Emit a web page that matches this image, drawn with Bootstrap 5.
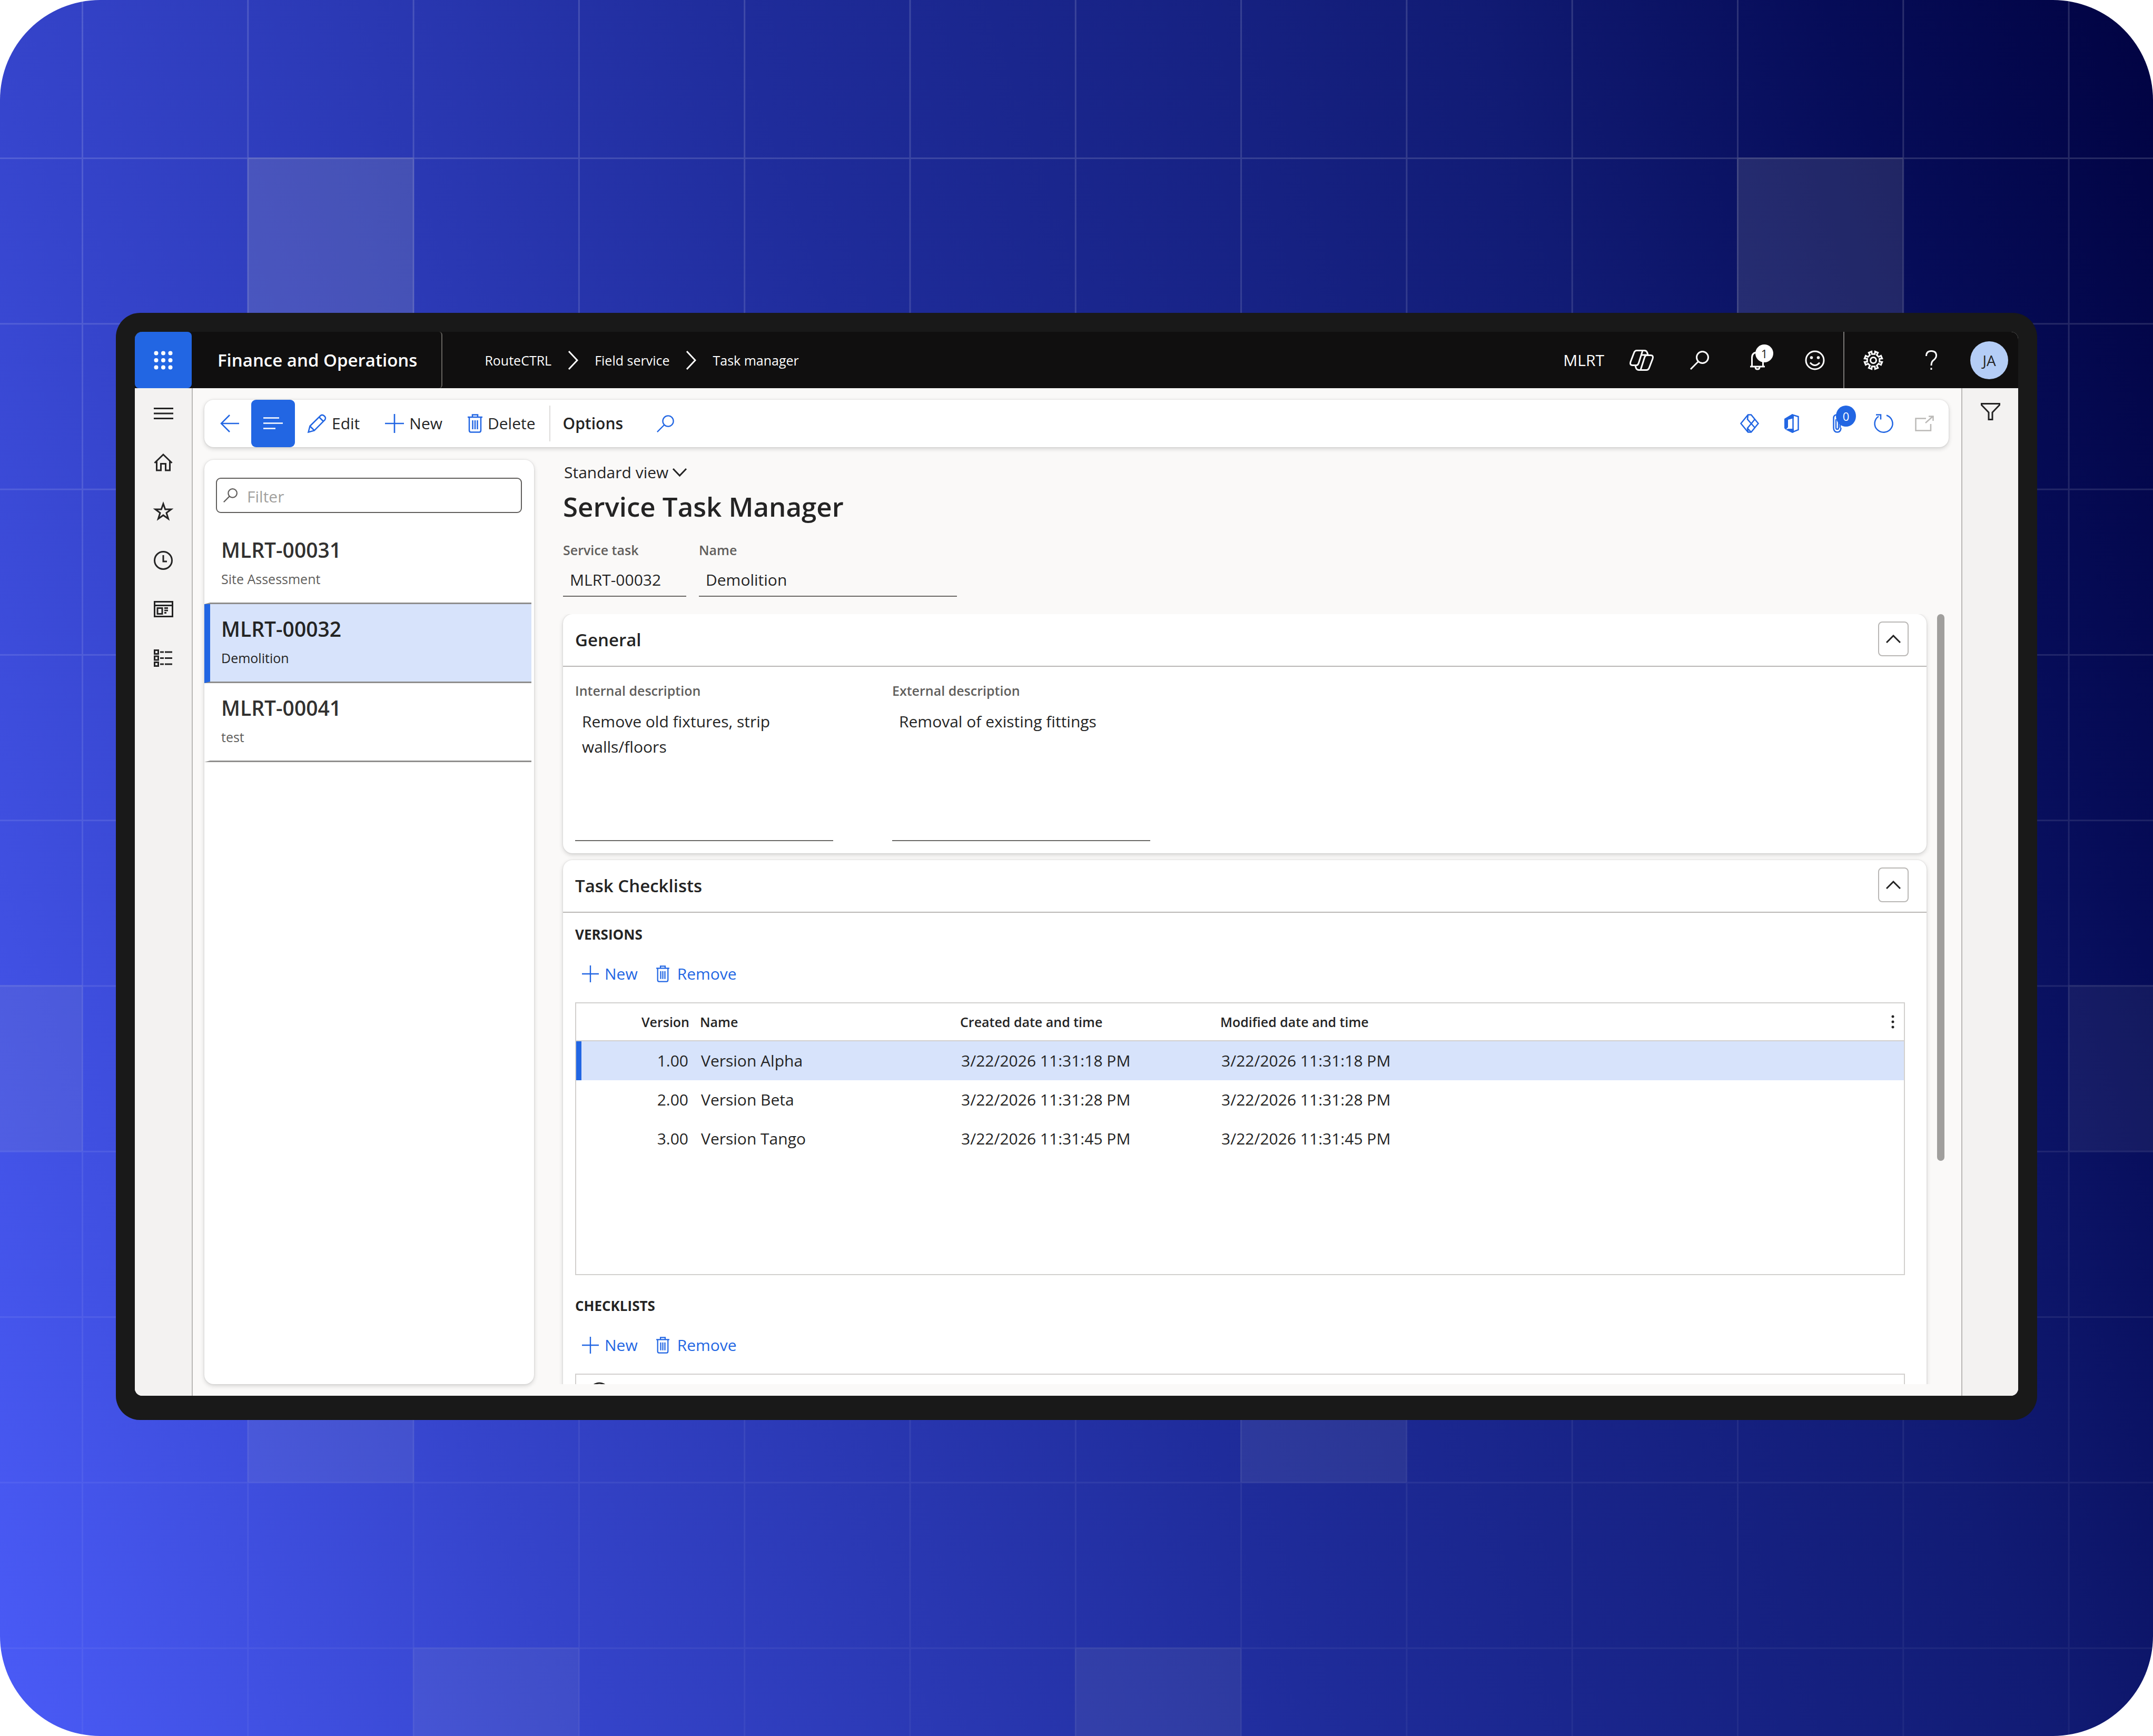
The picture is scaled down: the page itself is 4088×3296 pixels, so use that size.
<!DOCTYPE html>
<html lang="en">
<head>
<meta charset="utf-8">
<meta name="viewport" content="width=device-width, initial-scale=1">
<title>Service Task Manager</title>
<link href="https://cdn.jsdelivr.net/npm/bootstrap@5.3.0/dist/css/bootstrap.min.css" rel="stylesheet">
<style>
  :root { --ink:#242424; --soft:#605e5c; --brand:#2266e3; --pick:#d7e3fb; --rule:#b9b7b5; }
  body { font-family:"Open Sans","Noto Sans",sans-serif; font-size:30px; line-height:42px; color:var(--ink); background:#fff; }
  svg.ico { display:block; fill:none; stroke:currentColor; stroke-width:3; flex:none; overflow:visible; }
  svg.fill-ico, svg.ico .fill-ico { fill:currentColor; stroke:none; }
  .stage { height:100vh; padding:594px 220px 600px; border-radius:190px; overflow:hidden; }
  .backdrop { position:absolute; inset:0; width:100%; height:100%; }
  .device { background:#191919; border-radius:46px; padding:36px 36px 46px; }
  .screen { border-radius:14px; background:#faf9f8; }
  .plain { border:0; background:none; padding:0; color:inherit; font-size:30px; line-height:42px; border-radius:0; }

  .topbar { background:#100f0f; color:#fff; height:107px; flex:none; }
  .launcher { width:108px; background:var(--brand); border-radius:8px; }
  .product { font-size:33px; font-weight:600; padding-left:49px; padding-right:46px; border-right:2px solid #66645f; border-radius:0 6px 6px 0; }
  .trail { font-size:25px; padding-left:80px; gap:31px; }
  .trail a { color:#fff; text-decoration:none; }
  .cell { width:110px; }
  .cell-line { border-right:2px solid #7a7876; }
  .count { position:absolute; border-radius:50%; font-size:22px; line-height:34px; height:34px; min-width:34px; text-align:center; }
  .count-bell { background:#fff; color:#222; left:51px; top:24px; }
  .avatar { width:72px; height:72px; border-radius:50%; background:#b4cdf6; color:#242424; font-size:28px; }

  .rail { width:110px; flex:none; background:#f3f2f1; border-right:2px solid var(--rule); padding-top:1px; }
  .rail .plain { height:93px; }
  .rail-end { width:108px; flex:none; background:#f3f2f1; border-left:2px solid var(--rule); padding-top:28px; }
  .lift { background:#fff; border-radius:18px; box-shadow:0 3px 8px rgba(0,0,0,.16), 0 0 3px rgba(0,0,0,.12); }
  .work { padding:22px 24px 22px 22px; min-width:0; }
  .actions { height:90px; padding-left:30px; }
  .actions .plain { height:90px; gap:10px; }
  .actions .ico { color:var(--brand); stroke-width:2.5; }
  .actions .on { width:83px; background:var(--brand); border-radius:9px; margin-left:23px; }
  .actions .on .ico { color:#fff; }
  .actions .window-ico { color:#bbb9b7; }
  .bar-line { width:2px; height:68px; background:#dedcda; margin-left:26px; }
  .count-clip { background:var(--brand); color:#fff; left:6px; top:-16px; height:40px; min-width:38px; line-height:40px; }

  .below { padding-top:24px; min-height:0; }
  .finder { width:626px; padding-top:34px; }
  .filter-box { margin:0 23px 23px 22px; height:67px; border:2px solid var(--soft); border-radius:9px; padding-left:12px; gap:18px; color:var(--soft); }
  .filter-box input { border:0; outline:0; background:none; width:100%; font-size:30px; padding:4px 0 0; }
  .filter-box input::placeholder { color:#a19f9d; opacity:1; }
  .task { display:block; margin-right:5px; height:150px; padding:23px 0 0 21px; border-left:11px solid transparent; border-bottom:3px solid #8f8e8d; color:#323130; text-decoration:none; }
  .task strong { display:block; font-size:39px; line-height:48px; font-weight:600; margin-bottom:13px; }
  .task span { display:block; font-size:25px; line-height:36px; color:var(--soft); }
  .task.on { background:var(--pick); border-left-color:var(--brand); }
  .task.on, .task.on span { color:#242424; }

  .detail { margin-left:55px; padding-top:3px; min-width:0; }
  .view-pick { gap:8px; padding-left:2px; }
  h1.page-name { font-size:51px; line-height:68px; font-weight:600; margin:9px 0 31px; }
  .cap { display:block; font-size:25px; line-height:36px; font-weight:600; color:var(--soft); margin-bottom:9px; }
  .line-field { border:0; border-bottom:2px solid #6b6967; border-radius:0; background:none; color:var(--ink); font-size:30px; line-height:48px; padding:0 13px 2px; height:62px; width:490px; outline:0; display:block; resize:none; }
  .short { width:234px; }
  textarea.line-field { height:259px; padding-top:8px; overflow:hidden; }
  .scroller { margin:33px 0 0 -20px; padding-left:20px; min-height:0; overflow:hidden; gap:20px; }
  .thumb { width:14px; height:71%; border-radius:7px; background:#a09f9d; margin-right:8px; }
  .stack { gap:13px; min-height:min-content; min-width:0; }
  .pane-head { height:100px; border-bottom:2px solid var(--rule); padding:0 34px 4px 23px; }
  .pane-head h2 { font-size:33px; line-height:44px; font-weight:600; margin:0; padding-top:4px; }
  .fold { width:58px; height:66px; border:2px solid var(--rule); border-radius:8px; }
  .pane-body { padding:27px 41px 23px 23px; }
  .pane-wide { padding-top:23px; }
  .pane-body h3 { font-size:26px; line-height:36px; font-weight:700; margin:0 0 27px; }
  .grid-tools { height:60px; margin-bottom:24px; padding-left:13px; gap:35px; color:var(--brand); }
  .grid-tools .plain { gap:11px; }
  .grid-tools .ico { stroke-width:2.5; }
  .grid-box { border:2px solid #d2d0ce; min-height:518px; margin-bottom:40px; }
  .grid-box table { width:100%; table-layout:fixed; border-collapse:separate; border-spacing:0; }
  .grid-box th { font-size:25px; font-weight:600; height:72px; padding:0 10px; border-bottom:2px solid #d2d0ce; }
  .grid-box td { height:74px; padding:0 12px; }
  .grid-box .num { text-align:right; }
  .grid-box tr.on td { background:var(--pick); }
  .grid-box tr.on td:first-child { border-left:10px solid var(--brand); }
</style>
</head>
<body>
<svg width="0" height="0" class="position-absolute" aria-hidden="true">
  <symbol id="plus" viewBox="0 0 34 34"><path d="M17 0V34M0 17H34"/></symbol>
  <symbol id="bin" viewBox="0 0 28 36"><path d="M0 6H28M9 5V1.500H19V5M3 6V31Q3 34.500 6 34.500H22Q25 34.500 25 31V6M9.500 12V29M14 12V29M18.500 12V29"/></symbol>
  <symbol id="lens" viewBox="0 0 36 36"><circle cx="23.500" cy="12.500" r="11"/><path d="M15.500 20.500L1 35"/></symbol>
  <symbol id="up" viewBox="0 0 28 16"><path d="M1 15L14 2L27 15"/></symbol>
  <symbol id="next" viewBox="0 0 20 36"><path d="M2 1L18 18L2 35"/></symbol>
</svg>
<div class="stage position-relative d-flex flex-column">
  <svg class="backdrop" viewBox="0 0 4088 3296" preserveAspectRatio="none" aria-hidden="true">
    <defs>
      <linearGradient id="sky" gradientUnits="userSpaceOnUse" x1="0" y1="3296" x2="4669" y2="1732">
        <stop offset="0" stop-color="#4a5bf7"/><stop offset=".21" stop-color="#3544cb"/><stop offset=".48" stop-color="#1f2c9b"/><stop offset=".75" stop-color="#111b74"/><stop offset=".88" stop-color="#060c58"/><stop offset="1" stop-color="#010342"/>
      </linearGradient>
      <linearGradient id="fade" x1="0" y1="0" x2="0" y2="1"><stop offset="0" stop-color="#fff" stop-opacity=".15"/><stop offset="1" stop-color="#fff" stop-opacity=".05"/></linearGradient>
      <pattern id="cells" patternUnits="userSpaceOnUse" x="155" y="299" width="314.300" height="314.300"><path d="M0 1.500H315M1.500 0V315" stroke="#fff" stroke-width="3"/></pattern>
      <mask id="soft" maskUnits="userSpaceOnUse" x="0" y="0" width="4088" height="3296"><rect width="4088" height="3296" fill="url(#fade)"/></mask>
    </defs>
    <rect width="4088" height="3296" fill="url(#sky)"/>
    <g mask="url(#soft)"><rect width="4088" height="3296" fill="url(#cells)"/></g>
    <g fill="#c8c8b8">
      <rect x="470" y="299" width="316" height="316" opacity=".17"/><rect x="3298" y="299" width="316" height="316" opacity=".14"/>
      <rect x="-159" y="1870" width="316" height="316" opacity=".1"/><rect x="3927" y="1870" width="316" height="316" opacity=".07"/>
      <rect x="470" y="2499" width="316" height="316" opacity=".09"/><rect x="2355" y="2499" width="316" height="316" opacity=".09"/>
      <rect x="784" y="3128" width="316" height="316" opacity=".08"/><rect x="2041" y="3128" width="316" height="316" opacity=".08"/>
    </g>
  </svg>

  <div class="device position-relative d-flex flex-fill overflow-hidden">
    <div class="screen d-flex flex-column flex-fill overflow-hidden">
      <header class="topbar d-flex">
        <button class="launcher plain d-flex align-items-center justify-content-center" aria-label="App launcher">
          <svg class="ico fill-ico" width="36" height="36" viewBox="0 0 36 36"><circle cx="4.500" cy="4.500" r="4"/><circle cx="18" cy="4.500" r="4"/><circle cx="31.500" cy="4.500" r="4"/><circle cx="4.500" cy="18" r="4"/><circle cx="18" cy="18" r="4"/><circle cx="31.500" cy="18" r="4"/><circle cx="4.500" cy="31.500" r="4"/><circle cx="18" cy="31.500" r="4"/><circle cx="31.500" cy="31.500" r="4"/></svg>
        </button>
        <div class="product d-flex align-items-center">Finance and Operations</div>
        <nav class="trail d-flex align-items-center me-auto" aria-label="Breadcrumb">
          <a href="#">RouteCTRL</a>
          <svg class="ico" width="20" height="36"><use href="#next"/></svg>
          <a href="#">Field service</a>
          <svg class="ico" width="20" height="36"><use href="#next"/></svg>
          <a href="#">Task manager</a>
        </nav>
        <button class="plain pe-3">MLRT</button>
        <button class="cell plain d-flex align-items-center justify-content-center" aria-label="Copilot">
          <svg class="ico" width="46" height="40" viewBox="0 0 46 40"><path d="M26 1.500H14Q10 1.500 8.500 6L2 23Q0 29.500 6 29.500H13Q16 29.500 17.500 25L25 1.500H28Q32 1.500 33.500 5L35 9.500M20 38.500H32Q36 38.500 37.500 34L44 17Q46 10.500 40 10.500H33Q30 10.500 28.500 15L21 38.500H18Q14 38.500 12.500 35L11 30M22 10H33"/></svg>
        </button>
        <button class="cell plain d-flex align-items-center justify-content-center" aria-label="Search"><svg class="ico" width="36" height="36"><use href="#lens"/></svg></button>
        <button class="cell plain position-relative d-flex align-items-center justify-content-center" aria-label="Notifications">
          <svg class="ico" width="28" height="34" viewBox="0 0 28 34"><path d="M0 29H28M3.500 29V12Q3.500 2 14 2Q24.500 2 24.500 12V29M10 30Q10 34 14 34Q18 34 18 30"/></svg>
          <span class="count count-bell">1</span>
        </button>
        <button class="cell cell-line plain d-flex align-items-center justify-content-center" aria-label="Feedback">
          <svg class="ico" width="38" height="38" viewBox="0 0 38 38"><circle cx="19" cy="19" r="17"/><path d="M10 23.500Q19 33.500 28 23.500"/><circle class="fill-ico" cx="12.500" cy="14" r="2.800"/><circle class="fill-ico" cx="25.500" cy="14" r="2.800"/></svg>
        </button>
        <button class="cell plain d-flex align-items-center justify-content-center" aria-label="Settings">
          <svg class="ico" width="38" height="38" viewBox="0 0 38 38"><circle cx="19" cy="19" r="5.500"/><path d="M16.200 7.300L15.700 2.300L10.300 4.500L12.500 9L9 12.500L4.500 10.300L2.300 15.700L7.300 16.200V21.800L2.300 22.300L4.500 27.700L9 25.500L12.500 29L10.300 33.500L15.700 35.700L16.200 30.700H21.800L22.300 35.700L27.700 33.500L25.500 29L29 25.500L33.500 27.700L35.700 22.300L30.700 21.800V16.200L35.700 15.700L33.500 10.300L29 12.500L25.500 9L27.700 4.500L22.300 2.300L21.800 7.300Z"/></svg>
        </button>
        <button class="cell plain d-flex align-items-center justify-content-center" aria-label="Help">
          <svg class="ico" width="22" height="38" viewBox="0 0 22 38"><path d="M1.500 11Q1.500 1.500 11 1.500Q20.500 1.500 20.500 10Q20.500 15 15 19Q11 22 11 29M11 33.500V37"/></svg>
        </button>
        <div class="cell d-flex align-items-center justify-content-center"><button class="avatar plain">JA</button></div>
      </header>

      <div class="d-flex flex-fill overflow-hidden">
        <nav class="rail d-flex flex-column" aria-label="Main">
          <button class="plain d-flex align-items-center justify-content-center" aria-label="Menu"><svg class="ico" width="37" height="22" viewBox="0 0 37 22"><path d="M0 1.500H37M0 11H37M0 20.500H37"/></svg></button>
          <button class="plain d-flex align-items-center justify-content-center" aria-label="Home"><svg class="ico" width="36" height="34" viewBox="0 0 36 34"><path d="M1.500 18L18 2L34.500 18M5.500 15V32H13.500V19.500H22.500V32H30.500V15"/></svg></button>
          <button class="plain d-flex align-items-center justify-content-center" aria-label="Favorites"><svg class="ico" width="36" height="36" viewBox="0 0 36 36"><path d="M18 3.500L21.700 14H33L24 20.800L27.500 32L18 25.200L8.500 32L12 20.800L3 14H14.300Z"/></svg></button>
          <button class="plain d-flex align-items-center justify-content-center" aria-label="Recent"><svg class="ico" width="36" height="36" viewBox="0 0 36 36"><circle cx="18" cy="18" r="16.500"/><path d="M18 8V20H25"/></svg></button>
          <button class="plain d-flex align-items-center justify-content-center" aria-label="Workspaces"><svg class="ico" width="37" height="31" viewBox="0 0 37 31"><path d="M1.500 1.500H35.500V29.500H1.500ZM1.500 8.500H35.500M7 13.500H16V24.500H7ZM20 13.500H27M20 18H27M20 22.500H24"/></svg></button>
          <button class="plain d-flex align-items-center justify-content-center" aria-label="Modules"><svg class="ico" width="36" height="34" viewBox="0 0 36 34"><path d="M1.500 1.500H8.500V8.500H1.500ZM1.500 13H8.500V20H1.500ZM1.500 24.500H8.500V31.500H1.500ZM12 5H19M21 5H35M12 16.500H19M21 16.500H35M12 28H19M21 28H35"/></svg></button>
        </nav>

        <main class="work d-flex flex-column flex-fill overflow-hidden">
          <div class="actions lift d-flex align-items-center flex-shrink-0">
            <button class="plain d-flex align-items-center" aria-label="Back"><svg class="ico" width="36" height="34" viewBox="0 0 36 34"><path d="M18 1L2 17L18 33M2 17H36"/></svg></button>
            <button class="plain on d-flex align-items-center justify-content-center" aria-label="Show list"><svg class="ico" width="37" height="24" viewBox="0 0 37 24"><path d="M0 1.500H30M0 11.500H37M0 21.500H23"/></svg></button>
            <button class="plain d-flex align-items-center ms-4"><svg class="ico" width="36" height="36" viewBox="0 0 36 36"><path d="M1.500 34.500L4.500 23L25 2.800Q28.500 .5 32 4Q35.500 7.500 33 11L12.800 31.500ZM22 6L30 14M5 23.500L12.500 31"/></svg>Edit</button>
            <button class="plain d-flex align-items-center ms-5"><svg class="ico" width="36" height="36"><use href="#plus"/></svg>New</button>
            <button class="plain d-flex align-items-center ms-5"><svg class="ico" width="28" height="36"><use href="#bin"/></svg>Delete</button>
            <span class="bar-line"></span>
            <button class="plain fw-semibold ms-4">Options</button>
            <button class="plain ps-5 ms-3" aria-label="Find"><svg class="ico" width="33" height="33"><use href="#lens"/></svg></button>
            <div class="d-flex align-items-center ms-auto pe-4 me-1">
              <button class="plain" aria-label="Power Apps"><svg class="ico" width="36" height="36" viewBox="0 0 36 36"><path d="M15 1.500L1.500 18L15 34.500H21L34.500 18L21 1.500ZM15 1.500L14 10L28 26L21 34.500M21 34.500L14 27L28 10L21 1.500M15 34.500L14 27"/></svg></button>
              <button class="plain ps-5" aria-label="Open in Office"><svg class="ico" width="28" height="36" viewBox="0 0 28 36"><path class="fill-ico" d="M0 9L15 0L18 2V8L7 11V25L3 30L0 27ZM3 30L7 28H18V35L15 36Z"/><path d="M15 1.500L26.500 5V30L15 34.500M16.500 3V33"/></svg></button>
              <button class="plain ps-5 ms-3" aria-label="Attachments"><span class="position-relative d-block"><svg class="ico" width="18" height="36" viewBox="0 0 18 36"><path d="M1.500 26V8Q1.500 1.500 8 1.500Q14 1.500 14 8V26M1.500 26Q1.500 34.500 8.500 34.500Q15.500 34.500 15.500 26M6 10V26Q6 29 8.500 29Q11 29 11 26V10"/></svg><span class="count count-clip">0</span></span></button>
              <button class="plain ps-5 ms-2" aria-label="Refresh"><svg class="ico ms-1" width="38" height="36" viewBox="0 0 38 36"><path d="M24 2.500A17 16.500 0 1 1 9 4.500M4 1.500H13V10.500"/></svg></button>
              <button class="plain ps-4 ms-3" aria-label="Open in new window" disabled><svg class="ico window-ico" width="36" height="30" viewBox="0 0 36 30"><path d="M21 5.500H1.500V28.500H30V16M20 14L34 1.500M26 1.500H34.500V10"/></svg></button>
            </div>
          </div>

          <div class="below d-flex flex-fill">
            <aside class="finder lift flex-shrink-0">
              <label class="filter-box d-flex align-items-center"><svg class="ico" width="27" height="27"><use href="#lens"/></svg><input type="text" placeholder="Filter" aria-label="Filter"></label>
              <a class="task" href="#"><strong>MLRT-00031</strong><span>Site Assessment</span></a>
              <a class="task on" href="#" aria-current="true"><strong>MLRT-00032</strong><span>Demolition</span></a>
              <a class="task" href="#"><strong>MLRT-00041</strong><span>test</span></a>
            </aside>

            <section class="detail d-flex flex-column flex-fill">
              <button class="view-pick plain d-flex align-items-center align-self-start">Standard view <svg class="ico" width="27" height="16" viewBox="0 0 27 16"><path d="M1 1L13.500 14L26 1"/></svg></button>
              <h1 class="page-name">Service Task Manager</h1>
              <div class="d-flex gap-4">
                <div><label class="cap" for="task-id">Service task</label><input id="task-id" class="line-field short" value="MLRT-00032" readonly></div>
                <div><label class="cap" for="task-name">Name</label><input id="task-name" class="line-field" value="Demolition" readonly></div>
              </div>

              <div class="scroller d-flex flex-fill">
                <div class="stack d-flex flex-column flex-fill">
                  <section class="lift">
                    <div class="pane-head d-flex align-items-center justify-content-between"><h2>General</h2><button class="fold plain d-flex align-items-center justify-content-center" aria-label="Collapse General"><svg class="ico" width="28" height="16"><use href="#up"/></svg></button></div>
                    <div class="pane-body d-flex">
                      <div class="pe-5 me-5"><label class="cap" for="inside">Internal description</label><textarea id="inside" class="line-field" readonly>Remove old fixtures, strip walls/floors</textarea></div>
                      <div class="ps-3"><label class="cap" for="outside">External description</label><textarea id="outside" class="line-field" readonly>Removal of existing fittings</textarea></div>
                    </div>
                  </section>
                  <section class="lift">
                    <div class="pane-head d-flex align-items-center justify-content-between"><h2>Task Checklists</h2><button class="fold plain d-flex align-items-center justify-content-center" aria-label="Collapse Task Checklists"><svg class="ico" width="28" height="16"><use href="#up"/></svg></button></div>
                    <div class="pane-body pane-wide">
                      <h3>VERSIONS</h3>
                      <div class="grid-tools d-flex align-items-center">
                        <button class="plain d-flex align-items-center"><svg class="ico" width="32" height="32"><use href="#plus"/></svg>New</button>
                        <button class="plain d-flex align-items-center"><svg class="ico me-1" width="25" height="32"><use href="#bin"/></svg>Remove</button>
                      </div>
                      <div class="grid-box">
                        <table>
                          <colgroup><col style="width:90px"><col style="width:135px"><col style="width:494px"><col style="width:494px"><col><col style="width:60px"></colgroup>
                          <thead><tr><th></th><th class="num">Version</th><th>Name</th><th>Created date and time</th><th>Modified date and time</th><th class="px-0"><button class="plain d-block ms-auto" aria-label="Grid options"><svg class="ico fill-ico" width="40" height="26" viewBox="0 0 40 26"><circle cx="19" cy="3" r="2.500"/><circle cx="19" cy="13" r="2.500"/><circle cx="19" cy="23" r="2.500"/></svg></button></th></tr></thead>
                          <tbody>
                            <tr class="on"><td></td><td class="num">1.00</td><td>Version Alpha</td><td>3/22/2026 11:31:18 PM</td><td>3/22/2026 11:31:18 PM</td><td></td></tr>
                            <tr><td></td><td class="num">2.00</td><td>Version Beta</td><td>3/22/2026 11:31:28 PM</td><td>3/22/2026 11:31:28 PM</td><td></td></tr>
                            <tr><td></td><td class="num">3.00</td><td>Version Tango</td><td>3/22/2026 11:31:45 PM</td><td>3/22/2026 11:31:45 PM</td><td></td></tr>
                          </tbody>
                        </table>
                      </div>
                      <h3>CHECKLISTS</h3>
                      <div class="grid-tools d-flex align-items-center">
                        <button class="plain d-flex align-items-center"><svg class="ico" width="32" height="32"><use href="#plus"/></svg>New</button>
                        <button class="plain d-flex align-items-center"><svg class="ico me-1" width="25" height="32"><use href="#bin"/></svg>Remove</button>
                      </div>
                      <div class="grid-box"><svg class="ico mt-3 ms-4" width="40" height="40" viewBox="0 0 40 40"><circle cx="20" cy="18" r="18"/></svg></div>
                    </div>
                  </section>
                </div>
                <div class="thumb flex-shrink-0"></div>
              </div>
            </section>
          </div>
        </main>

        <aside class="rail-end">
          <button class="plain w-100 d-flex justify-content-center" aria-label="Filter pane"><svg class="ico" width="37" height="33" viewBox="0 0 37 33"><path d="M1.500 1.500H35.500V4L22 18V31.500H15V18L1.500 4Z"/></svg></button>
        </aside>
      </div>
    </div>
  </div>
</div>
<script src="https://cdn.jsdelivr.net/npm/bootstrap@5.3.0/dist/js/bootstrap.bundle.min.js"></script>
</body>
</html>
